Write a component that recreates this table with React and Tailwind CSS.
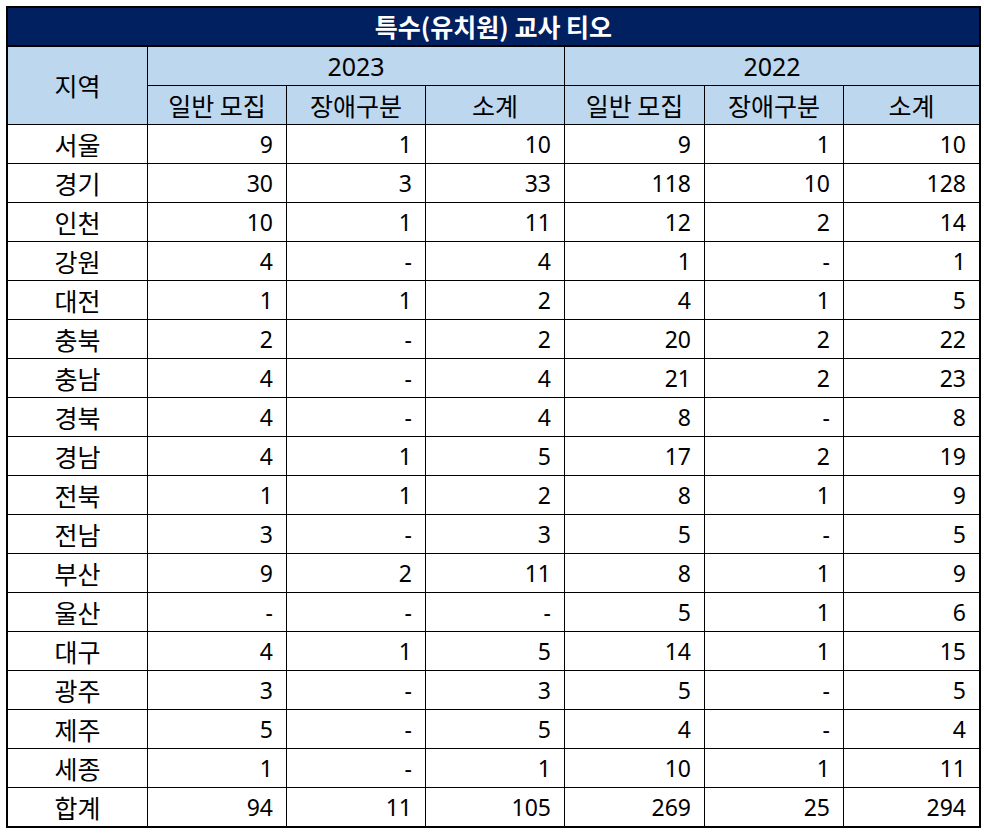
import React from 'react';

// 지역별 특수(유치원) 교사 티오 — [일반 모집, 장애구분, 소계] for 2023 then 2022
const rows = [
  ['서울', '9', '1', '10', '9', '1', '10'],
  ['경기', '30', '3', '33', '118', '10', '128'],
  ['인천', '10', '1', '11', '12', '2', '14'],
  ['강원', '4', '-', '4', '1', '-', '1'],
  ['대전', '1', '1', '2', '4', '1', '5'],
  ['충북', '2', '-', '2', '20', '2', '22'],
  ['충남', '4', '-', '4', '21', '2', '23'],
  ['경북', '4', '-', '4', '8', '-', '8'],
  ['경남', '4', '1', '5', '17', '2', '19'],
  ['전북', '1', '1', '2', '8', '1', '9'],
  ['전남', '3', '-', '3', '5', '-', '5'],
  ['부산', '9', '2', '11', '8', '1', '9'],
  ['울산', '-', '-', '-', '5', '1', '6'],
  ['대구', '4', '1', '5', '14', '1', '15'],
  ['광주', '3', '-', '3', '5', '-', '5'],
  ['제주', '5', '-', '5', '4', '-', '4'],
  ['세종', '1', '-', '1', '10', '1', '11'],
  ['합계', '94', '11', '105', '269', '25', '294'],
];

const subHeads = ['일반 모집', '장애구분', '소계', '일반 모집', '장애구분', '소계'];

const kr = "font-['Noto_Sans_CJK_KR','Noto_Sans',sans-serif] text-[25px] leading-none";
const num = "font-['Noto_Sans','Noto_Sans_CJK_KR',sans-serif] leading-none";

export default function App() {
  return (
    <div className="min-h-[835px] bg-white pl-[6px] pt-[6px] text-black">
      <div className="w-[975px] border-2 border-black bg-black">
        <div className="h-[37px] bg-[#002060] flex items-center justify-center text-white font-bold text-[25px] leading-none font-['Noto_Sans_CJK_KR',sans-serif]">
          특수(유치원) 교사 티오
        </div>
        <div className="mt-[2px] grid grid-cols-[139px_138px_138px_138px_139px_138px_135px] auto-rows-[38px] gap-px">
          <div className={`row-span-2 bg-[#BDD7EE] flex items-center justify-center ${kr}`}>지역</div>
          <div className={`col-span-3 bg-[#BDD7EE] flex items-center justify-center text-[25px] ${num}`}>2023</div>
          <div className={`col-span-3 bg-[#BDD7EE] flex items-center justify-center text-[25px] ${num}`}>2022</div>
          {subHeads.map((h, i) => (
            <div key={i} className={`bg-[#BDD7EE] flex items-center justify-center ${kr}`}>{h}</div>
          ))}
          {rows.map((r) => (
            <React.Fragment key={r[0]}>
              <div className={`bg-white flex items-center justify-center ${kr}`}>{r[0]}</div>
              {r.slice(1).map((v, i) => (
                <div key={i} className={`bg-white flex items-center justify-end pr-[13px] text-[23px] ${num}`}>{v}</div>
              ))}
            </React.Fragment>
          ))}
        </div>
      </div>
    </div>
  );
}
